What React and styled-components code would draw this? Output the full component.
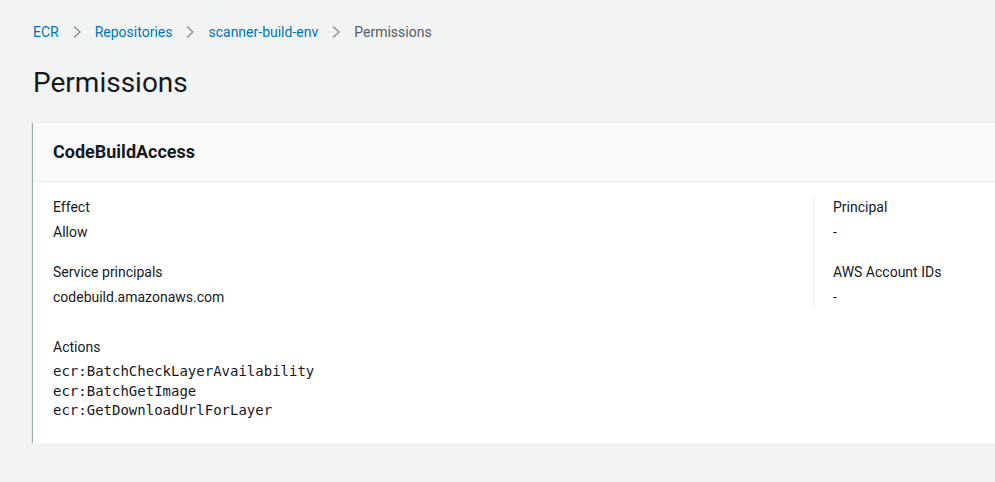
import React from "react";
import styled, { createGlobalStyle } from "styled-components";

const GlobalStyle = createGlobalStyle`
	html, body {
		margin: 0;
		padding: 0;
		background: #f2f3f3;
		font-family: Roboto, "Liberation Sans", Arial, sans-serif;
		color: #16191f;
		overflow: hidden;
	}
`;

const SPage = styled.div`
	padding: 22px 0 0 33px;
	width: 1400px;
`;

const SBreadcrumbs = styled.nav`
	display: flex;
	align-items: center;
	font-size: 14px;
	line-height: 20px;
	height: 20px;
`;

const SCrumb = styled.a`
	color: ${props => (props.current ? "#545b64" : "#0073bb")};
	text-decoration: none;
	cursor: ${props => (props.current ? "default" : "pointer")};
`;

const SChevron = styled.svg`
	width: 10px;
	height: 14px;
	margin: 0 13px;
	flex: 0 0 auto;
`;

const STitle = styled.h1`
	margin: 23px 0 0;
	font-size: 28px;
	line-height: 36px;
	font-weight: 400;
	color: #16191f;
`;

const SCard = styled.section`
	margin-top: 21px;
	width: 1200px;
	background: #fff;
	box-shadow: 0 1px 1px 0 rgba(0, 28, 36, 0.3), 1px 1px 1px 0 rgba(0, 28, 36, 0.15),
		-1px 1px 1px 0 rgba(0, 28, 36, 0.3);
	border-top: 1px solid #eaeded;
`;

const SCardHeader = styled.header`
	background: #fafafa;
	border-bottom: 1px solid #eaeded;
	padding: 18px 20px 18px;
	h2 {
		margin: 0;
		font-size: 18px;
		line-height: 22px;
		font-weight: 700;
	}
`;

const SCardBody = styled.div`
	padding: 15px 20px 22px;
`;

const SColumns = styled.div`
	display: grid;
	grid-template-columns: 760px 1fr;
`;

const SColumn = styled.div`
	display: flex;
	flex-direction: column;
	gap: 20px;
	${props =>
		props.divided &&
		`
		border-left: 1px solid #eaeded;
		padding-left: 19px;
	`}
	${props => !props.divided && `padding-right: 20px;`}
`;

const SField = styled.div`
	font-size: 14px;
	line-height: 20px;
`;

const SActions = styled(SField)`
	margin-top: 30px;
`;

const SLabel = styled.div`
	color: #16191f;
	margin-bottom: 5px;
`;

const SValue = styled.div`
	color: #16191f;
`;

const SCode = styled.div`
	font-family: "DejaVu Sans Mono", "Liberation Mono", monospace;
	font-size: 14px;
	line-height: 19.5px;
	color: #16191f;
`;

const Chevron = () => (
	<SChevron viewBox="0 0 10 14" aria-hidden="true">
		<path d="M2 1.5 L8 7 L2 12.5" fill="none" stroke="#879596" strokeWidth="1.4" />
	</SChevron>
);

const Field = ({ label, children }) => (
	<SField>
		<SLabel>{label}</SLabel>
		<SValue>{children}</SValue>
	</SField>
);

const actions = [
	"ecr:BatchCheckLayerAvailability",
	"ecr:BatchGetImage",
	"ecr:GetDownloadUrlForLayer",
];

const App = () => {
	return (
		<SPage>
			<GlobalStyle />
			<SBreadcrumbs>
				<SCrumb>ECR</SCrumb>
				<Chevron />
				<SCrumb>Repositories</SCrumb>
				<Chevron />
				<SCrumb>scanner-build-env</SCrumb>
				<Chevron />
				<SCrumb current>Permissions</SCrumb>
			</SBreadcrumbs>
			<STitle>Permissions</STitle>
			<SCard>
				<SCardHeader>
					<h2>CodeBuildAccess</h2>
				</SCardHeader>
				<SCardBody>
					<SColumns>
						<SColumn>
							<Field label="Effect">Allow</Field>
							<Field label="Service principals">codebuild.amazonaws.com</Field>
						</SColumn>
						<SColumn divided>
							<Field label="Principal">-</Field>
							<Field label="AWS Account IDs">-</Field>
						</SColumn>
					</SColumns>
					<SActions>
						<SLabel>Actions</SLabel>
						{actions.map(a => (
							<SCode key={a}>{a}</SCode>
						))}
					</SActions>
				</SCardBody>
			</SCard>
		</SPage>
	);
};

export default App;
